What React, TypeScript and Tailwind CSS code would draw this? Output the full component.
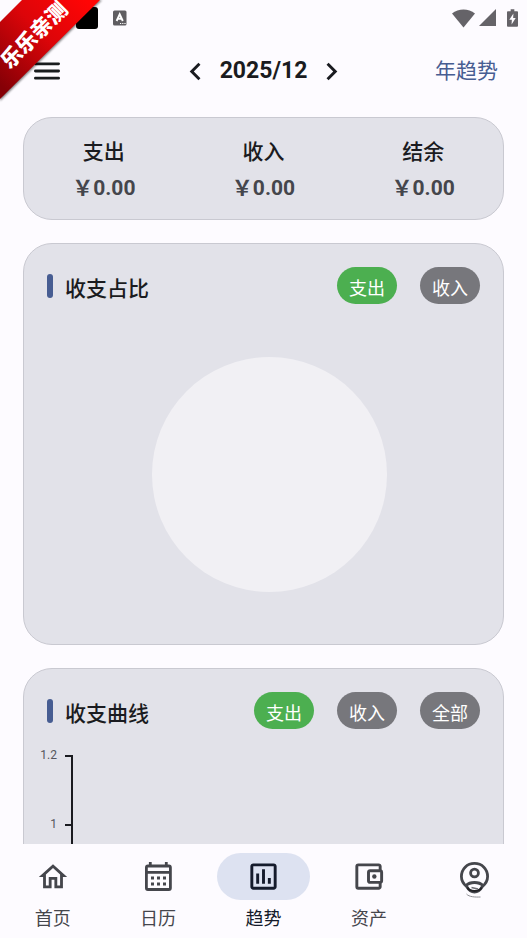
import { useState } from 'react';
import {
  MdChevronLeft,
  MdChevronRight,
  MdOutlineAccountBalanceWallet,
  MdOutlineHome,
  MdOutlineInsertChart,
} from 'react-icons/md';

const summary = [
  { label: '支出', value: '￥0.00' },
  { label: '收入', value: '￥0.00' },
  { label: '结余', value: '￥0.00' },
];

const axisTicks = ['1.2', '1'];

function StatusBar() {
  return (
    <div className="flex h-9 shrink-0 items-center justify-between pl-[76px] pr-[9px]">
      <div className="flex items-center gap-[15px]">
        <div className="h-[22px] w-[22px] rounded-[3px] bg-black" />
        <svg className="h-4 w-[14px]" viewBox="0 0 14 16">
          <rect width="13.500" height="15" y="0.500" rx="1.500" fill="#5f5d61" />
          <path d="M3.600 11L6.700 4.200L9.800 11M4.800 8.800H8.600" stroke="#fff" strokeWidth="1.900" fill="none" />
          <path d="M7 13.500h1.200M9.200 13.500h1.200M11.400 13.500h1.200" stroke="#fff" strokeWidth="1" />
        </svg>
      </div>
      <div className="flex items-center text-[#656368]">
        <svg className="h-[19px] w-[23px]" viewBox="0 0 23 19" fill="currentColor">
          <path d="M0 4.500C6.500-.8 16.500-.8 23 4.500L11.500 18.500Z" />
        </svg>
        <svg className="ml-1 h-[18px] w-[17px]" viewBox="0 0 17 18" fill="currentColor">
          <path d="M17 0V17H0Z" />
        </svg>
        <svg className="ml-[11px] h-5 w-[11px]" viewBox="0 0 12 20">
          <path
            d="M4 .5h4v2h3q1 0 1 1V18.500q0 1-1 1H1q-1 0-1-1V3.500q0-1 1-1h3Z"
            fill="currentColor"
          />
          <path d="M7 5L2.500 12H5.300L5 17L9.500 10H6.700Z" fill="#fdfbff" />
        </svg>
      </div>
    </div>
  );
}

function Ribbon() {
  return (
    <svg className="pointer-events-none absolute left-0 top-0 z-10 h-[104px] w-[104px]" viewBox="0 0 104 104">
      <defs>
        <linearGradient id="ribbon" x1="85" y1="0" x2="0" y2="85" gradientUnits="userSpaceOnUse">
          <stop offset="0" stopColor="#ff0505" />
          <stop offset="0.45" stopColor="#dc0509" />
          <stop offset="1" stopColor="#850006" />
        </linearGradient>
        <filter id="ribbonShadow">
          <feGaussianBlur stdDeviation="1.2" />
        </filter>
      </defs>
      <path d="M24 0H102L0 101V24Z" fill="#000" opacity="0.5" filter="url(#ribbonShadow)" />
      <path d="M22 0H100L0 99V22Z" fill="url(#ribbon)" />
      <text
        x="33"
        y="34"
        transform="rotate(-45 33 34)"
        textAnchor="middle"
        dominantBaseline="central"
        className="fill-white font-['Noto_Sans_CJK_SC',sans-serif] text-[21px] font-black"
      >
        乐乐亲测
      </text>
    </svg>
  );
}

function Chip({ label, active, onClick }: { label: string; active: boolean; onClick: () => void }) {
  return (
    <button
      type="button"
      aria-pressed={active}
      onClick={onClick}
      className={`flex h-[37px] w-[60px] items-center justify-center rounded-full pt-[5px] text-[18px] text-white ${
        active ? 'bg-[#4caf50]' : 'bg-[#77777c]'
      }`}
    >
      {label}
    </button>
  );
}

function CardHeader({ title, options }: { title: string; options: string[] }) {
  const [selected, setSelected] = useState(options[0]);

  return (
    <div className="flex items-center justify-between">
      <div className="flex items-center gap-3">
        <span className="h-6 w-[6px] rounded-full bg-[#475d92]" />
        <h2 className="pt-[6px] text-[21px] font-medium leading-[30px] text-[#1a1b20]">{title}</h2>
      </div>
      <div className="flex gap-[23px]">
        {options.map((option) => (
          <Chip key={option} label={option} active={option === selected} onClick={() => setSelected(option)} />
        ))}
      </div>
    </div>
  );
}

function CalendarIcon() {
  return (
    <svg className="h-[30px] w-[27px]" viewBox="0 0 27 30" fill="none" stroke="currentColor" strokeWidth="2.800">
      <rect x="1.400" y="4" width="24" height="23.500" rx="1.500" />
      <path d="M1.400 10.300H25.400M5.300 0V4M21.300 0V4" />
      <path d="M6 16h3M12 16h3M18 16h3M6 22h3M12 22h3M18 22h3" />
    </svg>
  );
}

function ProfileIcon() {
  return (
    <svg className="h-[42px] w-[35px]" viewBox="0 0 35 42" fill="none" stroke="currentColor" strokeWidth="2.8">
      <path d="M17.500 7.400C10 7.400 4.400 13 4.400 20.500C4.400 25 7 28.500 10 31C12 34.500 14.500 36 17.500 36C20.500 36 23 34.500 25 31C28 28.500 30.600 25 30.600 20.500C30.600 13 25 7.400 17.500 7.400Z" />
      <circle cx="17.500" cy="17" r="3.900" />
      <path d="M9 29.500C13 25.500 22 25.500 26 29.500" />
      <path d="M10.500 31.500C12 36 23 36 24.500 31.500" stroke="#222226" strokeWidth="2" />
      <path d="M14.500 31.500L21 33" stroke="#6c6c72" strokeWidth="1.500" />
      <path d="M9.500 38C12 41 18 41.200 23.500 41" stroke="#8f8f94" strokeWidth="1" />
    </svg>
  );
}

const navItems = [
  { label: '首页', icon: <MdOutlineHome size={34} /> },
  { label: '日历', icon: <CalendarIcon /> },
  { label: '趋势', icon: <MdOutlineInsertChart size={35} /> },
  { label: '资产', icon: <MdOutlineAccountBalanceWallet size={35} /> },
  { label: '', icon: <ProfileIcon /> },
];

function BottomNav() {
  const [current, setCurrent] = useState(2);

  return (
    <nav className="grid h-[94px] shrink-0 grid-cols-5 bg-[#fdfbff] pt-[9px]">
      {navItems.map((item, i) => (
        <button
          key={i}
          type="button"
          aria-label={item.label || '我的'}
          onClick={() => setCurrent(i)}
          className={`flex flex-col items-center gap-[5px] ${i === current ? 'text-[#151b2c]' : 'text-[#45464c]'}`}
        >
          <span
            className={`flex h-[47px] w-[93px] items-center justify-center rounded-full ${
              i === current ? 'bg-[#dde2f1]' : ''
            }`}
          >
            {item.icon}
          </span>
          <span className="text-[18px] leading-7">{item.label}</span>
        </button>
      ))}
    </nav>
  );
}

export default function App() {
  return (
    <div className="relative flex h-screen flex-col overflow-hidden bg-[#fdfbff] font-['Roboto','Noto_Sans_CJK_SC',sans-serif] text-[#1a1b20]">
      <Ribbon />
      <StatusBar />

      <header className="grid h-[70px] shrink-0 grid-cols-3 items-center px-[29px]">
        <button type="button" aria-label="菜单" className="w-fit pl-[5px]">
          <svg className="h-[18px] w-[26px]" viewBox="0 0 26 18" stroke="#191c1e" strokeWidth="2.8" strokeLinecap="round">
            <path d="M1.400 1.800H24.600M1.400 9H24.600M1.400 16.200H24.600" />
          </svg>
        </button>
        <div className="flex items-center justify-center gap-[7px]">
          <button type="button" aria-label="上个月">
            <MdChevronLeft size={35} />
          </button>
          <h1 className="text-[23px] font-bold">2025/12</h1>
          <button type="button" aria-label="下个月">
            <MdChevronRight size={35} />
          </button>
        </div>
        <a href="#year" className="justify-self-end pt-[2px] text-[21px] text-[#475d92]">
          年趋势
        </a>
      </header>

      <main className="flex min-h-0 grow flex-col gap-[23px] overflow-y-auto px-[23px] pt-[11px] [scrollbar-width:none]">
        <section className="grid shrink-0 grid-cols-3 rounded-[29px] border border-[#c9c9d1] bg-[#e2e2e9] pb-[13px] pt-4 text-center">
          {summary.map((item) => (
            <div key={item.label}>
              <p className="text-[21px] font-medium leading-9">{item.label}</p>
              <p className="text-[21px] font-bold leading-9 text-[#45464c]">{item.value}</p>
            </div>
          ))}
        </section>

        <section className="shrink-0 rounded-[29px] border border-[#c9c9d1] bg-[#e2e2e9] px-[23px] pb-[52px] pt-[23px]">
          <CardHeader title="收支占比" options={['支出', '收入']} />
          <div className="flex justify-center pl-3 pt-[53px]">
            <div className="h-[235px] w-[235px] rounded-full bg-[#f1f0f4]" />
          </div>
        </section>

        <section className="shrink-0 rounded-[29px] border border-[#c9c9d1] bg-[#e2e2e9] px-[23px] pt-[23px]">
          <CardHeader title="收支曲线" options={['支出', '收入', '全部']} />
          <div className="mt-[26px] w-[26px]">
            {axisTicks.map((tick) => (
              <div key={tick} className="flex h-[69px] w-full border-r-2 border-[#1a1b20]">
                <span className="-ml-2 -mt-2 w-[18px] text-right text-xs leading-4 text-[#55565c]">{tick}</span>
                <span className="ml-auto h-[2px] w-[6px] shrink-0 bg-[#1a1b20]" />
              </div>
            ))}
          </div>
        </section>
      </main>

      <BottomNav />
    </div>
  );
}
